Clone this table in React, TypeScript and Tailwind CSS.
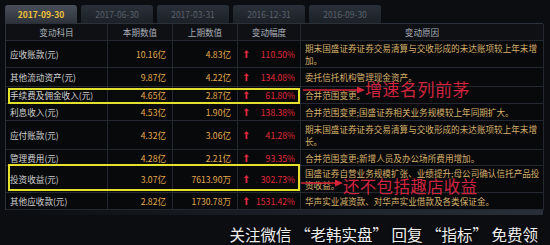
import React from 'react';

interface Row {
    name: string;
    cur: string;
    prev: string;
    pct: string;
    reason: string;
    h: string;
    note?: 'a' | 'b';
}

const rows: Row[] = [
    { name: '应收账款(元)', cur: '10.16亿', prev: '4.83亿', pct: '110.50%', reason: '期末国盛证券证券交易清算与交收形成的未达账项较上年末增加。', h: 'h-[27px]' },
    { name: '其他流动资产(元)', cur: '9.87亿', prev: '4.22亿', pct: '134.08%', reason: '委托信托机构管理现金资产。', h: 'h-[19px]' },
    { name: '手续费及佣金收入(元)', cur: '4.65亿', prev: '2.87亿', pct: '61.80%', reason: '合并范围变更。', h: 'h-[17px]', note: 'a' },
    { name: '利息收入(元)', cur: '4.53亿', prev: '1.90亿', pct: '138.38%', reason: '合并范围变更;国盛证券相关业务规模较上年同期扩大。', h: 'h-[17px]' },
    { name: '应付账款(元)', cur: '4.32亿', prev: '3.06亿', pct: '41.28%', reason: '期末国盛证券证券交易清算与交收形成的未达账项较上年末增长。', h: 'h-[29px]' },
    { name: '管理费用(元)', cur: '4.28亿', prev: '2.21亿', pct: '93.35%', reason: '合并范围变更;新增人员及办公场所费用增加。', h: 'h-[16px]' },
    { name: '投资收益(元)', cur: '3.07亿', prev: '7613.90万', pct: '302.73%', reason: '国盛证券自营业务规模扩张、业绩提升;母公司确认信托产品投资收益。', h: 'h-[27px]', note: 'b' },
    { name: '其他应收款(元)', cur: '2.82亿', prev: '1730.78万', pct: '1531.42%', reason: '华声实业减资款、对华声实业借款及各类保证金。', h: 'h-[17px]' },
];

const tabs = ['2017-09-30', '2017-06-30', '2017-03-31', '2016-12-31', '2016-09-30'];

const UpArrow = () => (
    <svg width="5" height="8" viewBox="0 0 5 8" className="shrink-0">
        <path d="M2.5 0 L5 3 L3.4 3 L3.4 8 L1.6 8 L1.6 3 L0 3 Z" fill="#e0283a" />
    </svg>
);

const RedArrow = ({ len }: { len: number }) => (
    <svg width={len} height="8" viewBox={`0 0 ${len} 8`}>
        <line x1="0" y1="4" x2={len - 6} y2="4" stroke="#d9253c" strokeWidth="1.6" />
        <path d={`M${len - 8} 0.5 L${len} 4 L${len - 8} 7.5 Z`} fill="#d9253c" />
    </svg>
);

const cell = 'border-r border-b border-[#232831] flex items-center';

export default function App() {
    return (
        <div
            className="w-[550px] h-[245px] bg-[#0b0d11] overflow-hidden"
            style={{ fontFamily: '"Noto Sans CJK SC", "Noto Sans", sans-serif' }}
        >
            {/* Tabs */}
            <div className="flex gap-[4px] pl-[5px] pt-[5px]">
                {tabs.map((t, i) => (
                    <div
                        key={t}
                        className={
                            i === 0
                                ? 'w-[72px] h-[18px] rounded-t-[3px] bg-linear-to-b from-[#4a505a] to-[#2e333b] text-[#f2c23a] font-bold text-[8.5px] flex items-center justify-center'
                                : 'w-[72px] h-[18px] rounded-t-[3px] bg-linear-to-b from-[#2a3039] to-[#1c2128] text-[#59616c] text-[8.5px] flex items-center justify-center'
                        }
                    >
                        {t}
                    </div>
                ))}
            </div>

            {/* Table */}
            <div className="ml-[5px] w-[538px] border-l border-t border-[#2b313b] bg-[#08090b] text-[8.6px] leading-[12px]">
                <div className="grid grid-cols-[102px_65px_65px_63px_243px] h-[17px] bg-[#0e1014] text-[#a9adb4]">
                    <div className={`${cell} justify-center`}>变动科目</div>
                    <div className={`${cell} justify-center`}>本期数值</div>
                    <div className={`${cell} justify-center`}>上期数值</div>
                    <div className={`${cell} justify-center`}>变动幅度</div>
                    <div className={`${cell} justify-center`}>变动原因</div>
                </div>
                {rows.map((r) => (
                    <div key={r.name} className={`relative grid grid-cols-[102px_65px_65px_63px_243px] ${r.h}`}>
                        <div className={`${cell} pl-[4px] text-[#cfd0d2]`}>{r.name}</div>
                        <div className={`${cell} justify-end pr-[6px] text-[#e3a94e]`}>{r.cur}</div>
                        <div className={`${cell} justify-end pr-[6px] text-[#e3a94e]`}>{r.prev}</div>
                        <div className={`${cell} justify-between pl-[6px] pr-[5px] text-[#e0283a]`}>
                            <UpArrow />
                            <span>{r.pct}</span>
                        </div>
                        <div className={`${cell} pl-[4px] pr-[2px] text-[#d6b06a]`}>{r.reason}</div>

                        {r.note === 'a' && (
                            <>
                                <div className="absolute left-[2px] top-[1px] w-[292px] h-[16px] border-2 border-[#e4e12e]" />
                                <div className="absolute left-[297px] top-[-6px] flex items-center">
                                    <RedArrow len={62} />
                                    <span className="text-[17px] leading-[20px] text-[#cf2440] tracking-[0.5px] -mt-[2px]">增速名列前茅</span>
                                </div>
                            </>
                        )}
                        {r.note === 'b' && (
                            <>
                                <div className="absolute left-[2px] top-[-2px] w-[292px] h-[27px] border-2 border-[#e4e12e]" />
                                <div className="absolute left-[295px] top-[13px]">
                                    <RedArrow len={42} />
                                </div>
                                <span className="absolute left-[337px] top-[10px] text-[16.5px] leading-[20px] text-[#cf2440] tracking-[0.3px]">
                                    还不包括趣店收益
                                </span>
                            </>
                        )}
                    </div>
                ))}
            </div>
            <div className="ml-[5px] w-[538px] h-[5px] bg-linear-to-r from-transparent via-[#1b1f25] to-[#2a2f37]" />

            {/* Caption */}
            <div className="flex justify-end pr-[12px] pt-[9px]">
                <span className="text-[15.5px] leading-[20px] text-[#eeeeee] [text-shadow:0_1px_2px_#000]">
                    关注微信 “老韩实盘” 回复 “指标” 免费领
                </span>
            </div>
        </div>
    );
}
